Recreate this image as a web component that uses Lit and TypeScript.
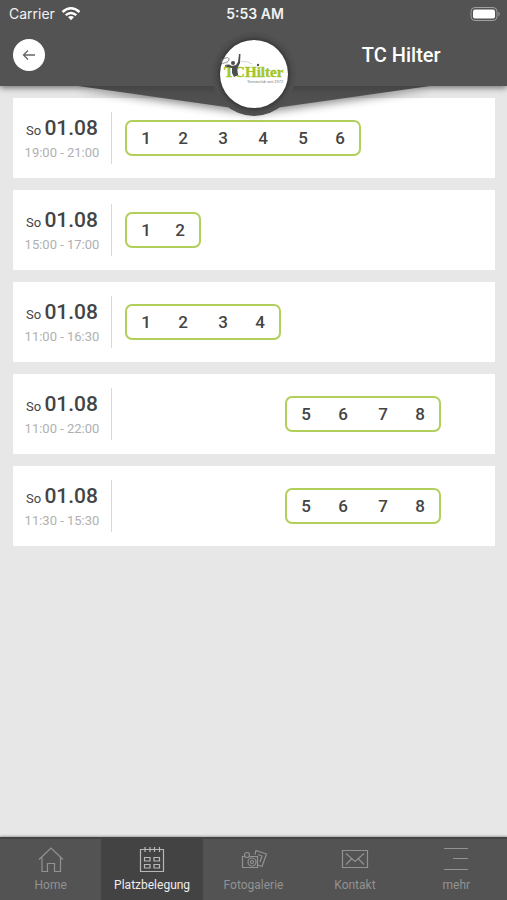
import { LitElement, html, css, svg } from "lit";
import { customElement } from "lit/decorators.js";
import { classMap } from "lit/directives/class-map.js";
import { styleMap } from "lit/directives/style-map.js";

interface Booking {
  day: string;
  date: string;
  time: string;
  courts: number[];
}

const BOOKINGS: Booking[] = [
  { day: "So", date: "01.08", time: "19:00 - 21:00", courts: [1, 2, 3, 4, 5, 6] },
  { day: "So", date: "01.08", time: "15:00 - 17:00", courts: [1, 2] },
  { day: "So", date: "01.08", time: "11:00 - 16:30", courts: [1, 2, 3, 4] },
  { day: "So", date: "01.08", time: "11:00 - 22:00", courts: [5, 6, 7, 8] },
  { day: "So", date: "01.08", time: "11:30 - 15:30", courts: [5, 6, 7, 8] },
];

const TABS = [
  {
    label: "Home",
    icon: svg`<path d="M2 14.500 14 3 26 14.500M5 12.500V26.500H10.500V18.500H17.500V26.500H23.500V12.500"/>`,
  },
  {
    label: "Platzbelegung",
    active: true,
    icon: svg`<path d="M2.500 4.500H25.500V26.500H2.500ZM7 2V7M12 2V7M16.500 2V7M21.500 2V7M6.500 12.500H12V16H6.500ZM16 12.500H21.500V16H16ZM6.500 19.500H12V23H6.500ZM16 19.500H21.500V23H16Z"/>`,
  },
  {
    label: "Fotogalerie",
    icon: svg`<path d="M4.500 11.500H2.500V22.500H17.500V11.500H9.500M15 9.500 16 5.500 26.500 9 22 21.500 18 20M18 9.500 22 11 20 17"/><circle cx="7" cy="10" r="2.500"/><circle cx="12" cy="17" r="4"/><circle cx="12" cy="17" r="1.500"/>`,
  },
  {
    label: "Kontakt",
    icon: svg`<path d="M1.500 5.500H26.500V22.500H1.500ZM5 8.500 14 16.500 23 8.500M5 19.500 10.500 14M23 19.500 17.500 14"/>`,
  },
  {
    label: "mehr",
    icon: svg`<path d="M2 3.500H26M11 13.500H26M2 24.500H26"/>`,
  },
];

@customElement("status-bar")
class StatusBar extends LitElement {
  static styles = css`
    :host {
      display: grid;
      grid-template-columns: 1fr auto 1fr;
      align-items: center;
      height: 28px;
      padding: 0 6px 0 9px;
      font: 400 14px/20px Inter, sans-serif;
      color: #f2f2f2;
    }
    .carrier {
      display: flex;
      align-items: center;
      gap: 6px;
    }
    .time {
      font-weight: 600;
    }
    .battery {
      justify-self: end;
    }
    svg {
      display: block;
    }
  `;
  render() {
    return html`
      <span class="carrier">
        Carrier
        <svg width="20" height="14" viewBox="0 0 20 14" fill="none" stroke="#fff" stroke-width="2.400">
          <path d="M1.500 5Q10-2.500 18.500 5M4.700 8.200Q10 3.700 15.300 8.200" />
          <path d="M7 10Q10 7.800 13 10L10 13.300Z" fill="#fff" stroke="none" />
        </svg>
      </span>
      <span class="time">5:53 AM</span>
      <svg class="battery" width="31" height="14" viewBox="0 0 31 14">
        <rect x="1" y="0.500" width="26" height="13" rx="4" fill="none" stroke="#a0a0a0" />
        <rect x="3" y="2.500" width="22" height="9" rx="2" fill="#fff" />
        <path d="M28.500 4.500Q31 7 28.500 9.500Z" fill="#a0a0a0" />
      </svg>
    `;
  }
}

@customElement("club-badge")
class ClubBadge extends LitElement {
  static styles = css`
    :host {
      display: block;
      width: 68px;
      height: 68px;
      border-radius: 50%;
      background: #fff;
      box-shadow: 0 0 5px 1px #2c2c2c;
    }
    svg {
      display: block;
    }
    .name {
      font: 700 15px "Liberation Serif", serif;
      fill: #a5c522;
      stroke: #a5c522;
      stroke-width: 0.4px;
    }
    .claim {
      font: 400 4px "Liberation Sans", sans-serif;
      fill: #777;
    }
  `;
  render() {
    return html`
      <svg width="68" height="68" viewBox="0 0 68 68">
        <text class="name" x="4" y="37">TC</text>
        <text class="name" x="25" y="37">Hilter</text>
        <text class="claim" x="27" y="43">Tennisclub seit 1972</text>
        <path d="M5 25 9 24.500 12 26 16 25 18 22 19 14 20.500 14 20 23 17 29 18 35 14 37 12 33 12 28 5 26.500Z" fill="#4d4d4d" />
        <circle cx="13" cy="23" r="2" fill="#4d4d4d" />
        <ellipse cx="5" cy="20.500" rx="4.500" ry="2.200" transform="rotate(-25 5 20.500)" fill="none" stroke="#777" stroke-width="0.700" />
        <path d="M8 21 6 26M21 21.500Q28 21 32 24" fill="none" stroke="#bbb" stroke-width="0.600" />
        <circle cx="38" cy="25" r="1.200" fill="#555" />
      </svg>
    `;
  }
}

@customElement("app-header")
class AppHeader extends LitElement {
  static styles = css`
    :host {
      display: block;
      position: relative;
      z-index: 1;
      background: #535353;
      box-shadow: 0 2px 6px rgba(0, 0, 0, 0.5);
    }
    .bar {
      display: grid;
      grid-template-columns: 1fr 84px 1fr;
      align-items: center;
      height: 58px;
      box-sizing: border-box;
      padding-bottom: 4px;
    }
    .back {
      display: flex;
      align-items: center;
      justify-content: center;
      width: 32px;
      height: 32px;
      margin-left: 13px;
      padding: 0;
      border: 0;
      border-radius: 50%;
      background: #fff;
    }
    .title {
      grid-column: 3;
      margin: 0;
      text-align: center;
      font: 500 20px/24px Roboto, sans-serif;
      color: #fff;
    }
    .ribbon {
      position: absolute;
      top: 100%;
      left: 0;
      width: 100%;
      height: 40px;
      overflow: hidden;
      pointer-events: none;
    }
    .ribbon svg {
      display: block;
      width: 100%;
      height: 40px;
      filter: drop-shadow(0 3px 4px rgba(0, 0, 0, 0.45));
    }
    .medallion {
      position: absolute;
      top: 32px;
      left: 50%;
      display: flex;
      align-items: center;
      justify-content: center;
      width: 84px;
      height: 84px;
      border-radius: 50%;
      background: #505050;
      transform: translateX(-50%);
    }
  `;
  render() {
    return html`
      <status-bar></status-bar>
      <div class="bar">
        <button class="back" aria-label="Zurück">
          <svg width="14" height="12" viewBox="0 0 14 12" fill="none" stroke="#666" stroke-width="1.300">
            <path d="M13 6H1.500M6 1.500 1.500 6 6 10.500" />
          </svg>
        </button>
        <h1 class="title">TC Hilter</h1>
      </div>
      <div class="ribbon">
        <svg viewBox="0 0 507 40" preserveAspectRatio="none">
          <defs>
            <linearGradient id="fold" x1="0" y1="0" x2="0" y2="1">
              <stop offset="0" stop-color="#444" />
              <stop offset="0.300" stop-color="#4e4e4e" />
              <stop offset="1" stop-color="#535353" />
            </linearGradient>
          </defs>
          <path d="M78 0 254 25 430 0Z" fill="url(#fold)" />
        </svg>
      </div>
      <div class="medallion"><club-badge></club-badge></div>
    `;
  }
}

@customElement("booking-card")
class BookingCard extends LitElement {
  static properties = { booking: { attribute: false } };
  declare booking: Booking;

  static styles = css`
    :host {
      display: flex;
      align-items: center;
      height: 80px;
      background: #fff;
      font-family: Roboto, sans-serif;
      color: #444;
    }
    .when {
      box-sizing: border-box;
      width: 99px;
      height: 52px;
      padding-top: 4px;
      border-right: 1px solid #d5e4a2;
      text-align: center;
    }
    .date {
      font-size: 13px;
      line-height: 24px;
    }
    .date b {
      font-size: 21px;
      font-weight: 500;
    }
    .time {
      font-size: 13px;
      line-height: 20px;
      color: #b0b0b0;
    }
    .courts {
      display: grid;
      grid-template-columns: repeat(8, 40px);
      margin-left: 13px;
    }
    .group {
      display: flex;
      box-sizing: border-box;
      height: 36px;
      margin: 0 4px 0 0;
      padding: 0 2px;
      border: 2px solid #b3cf5b;
      border-radius: 7px;
      list-style: none;
    }
    .court {
      width: 40px;
      text-align: center;
      font-size: 17px;
      font-weight: 500;
      line-height: 32px;
    }
    .court:first-child,
    .court:last-child {
      width: 34px;
    }
  `;
  render() {
    const { day, date, time, courts } = this.booking;
    return html`
      <div class="when">
        <div class="date">${day} <b>${date}</b></div>
        <div class="time">${time}</div>
      </div>
      <div class="courts">
        <ul class="group" style=${styleMap({ gridColumn: `${courts[0]} / span ${courts.length}` })}>
          ${courts.map((n) => html`<li class="court">${n}</li>`)}
        </ul>
      </div>
    `;
  }
}

@customElement("tab-bar")
class TabBar extends LitElement {
  static styles = css`
    :host {
      display: flex;
      height: 63px;
      box-sizing: border-box;
      border-top: 2px solid #444;
      background: #535353;
      box-shadow: 0 -1px 2px rgba(0, 0, 0, 0.3);
    }
    .tab {
      flex: 1 1 0;
      display: flex;
      flex-direction: column;
      align-items: center;
      gap: 4px;
      padding-top: 6px;
      font: 400 12px/16px Roboto, sans-serif;
      color: #929292;
      text-decoration: none;
    }
    .active {
      background: #434343;
      color: #eee;
    }
    .icon {
      width: 28px;
      height: 28px;
      fill: none;
      stroke: #929292;
      stroke-width: 1.2px;
    }
    .active .icon {
      stroke: #b8b8b8;
    }
  `;
  render() {
    return TABS.map(
      (t) => html`
        <a href="#" class=${classMap({ tab: true, active: !!t.active })}>
          <svg class="icon" viewBox="0 0 28 28">${t.icon}</svg>
          ${t.label}
        </a>
      `
    );
  }
}

@customElement("app-root")
class AppRoot extends LitElement {
  static styles = css`
    :host {
      display: flex;
      flex-direction: column;
      min-height: 100vh;
      background: #e7e7e7;
    }
    .list {
      flex: 1;
      display: flex;
      flex-direction: column;
      gap: 12px;
      padding: 12px 12px 12px 13px;
    }
  `;
  render() {
    return html`
      <app-header></app-header>
      <main class="list">
        ${BOOKINGS.map((b) => html`<booking-card .booking=${b}></booking-card>`)}
      </main>
      <tab-bar></tab-bar>
    `;
  }
}
